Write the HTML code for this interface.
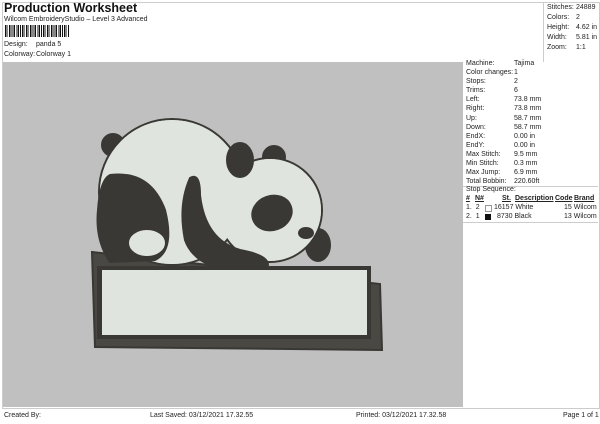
<!DOCTYPE html><html><head><style>
body{margin:0;width:600px;height:424px;background:#fff;font-family:"Liberation Sans",sans-serif;position:relative;overflow:hidden;color:#222}
.a{position:absolute;white-space:nowrap;font-size:7px}
</style></head><body>
<div style="position:absolute;left:2px;top:2px;width:596px;height:405px;border:1px solid #ccc"></div>
<div class="a" style="left:4px;top:1px;font-size:12.5px;font-weight:bold;color:#111">Production Worksheet</div>
<div class="a" style="left:4px;top:16px">Wilcom EmbroideryStudio – Level 3 Advanced</div>
<div style="position:absolute;left:5px;top:25px;width:64px;height:12px;background:repeating-linear-gradient(90deg,#111 0 1.5px,#fff 1.5px 2.5px,#111 2.5px 3.2px,#fff 3.2px 4.2px)"></div>
<div class="a" style="left:4px;top:41px">Design:</div><div class="a" style="left:36px;top:41px">panda 5</div>
<div class="a" style="left:4px;top:51px">Colorway:</div><div class="a" style="left:36px;top:51px">Colorway 1</div>
<div style="position:absolute;left:543px;top:2px;width:1px;height:60px;background:#ccc"></div>
<div class="a" style="left:547px;top:3px;line-height:10px">Stitches:<br>Colors:<br>Height:<br>Width:<br>Zoom:</div>
<div class="a" style="left:576px;top:3px;line-height:10px">24889<br>2<br>4.62 in<br>5.81 in<br>1:1</div>
<div style="position:absolute;left:3px;top:62px;width:460px;height:345px;background:#c0c0c0"></div>
<div class="a" style="left:466px;top:59px;line-height:9.1px">Machine:<br>Color changes:<br>Stops:<br>Trims:<br>Left:<br>Right:<br>Up:<br>Down:<br>EndX:<br>EndY:<br>Max Stitch:<br>Min Stitch:<br>Max Jump:<br>Total Bobbin:</div>
<div class="a" style="left:514px;top:59px;line-height:9.1px">Tajima<br>1<br>2<br>6<br>73.8 mm<br>73.8 mm<br>58.7 mm<br>58.7 mm<br>0.00 in<br>0.00 in<br>9.5 mm<br>0.3 mm<br>6.9 mm<br>220.60ft</div>
<div style="position:absolute;left:463px;top:186px;width:135px;height:1px;background:#ccc"></div>
<div class="a" style="left:466px;top:186px">Stop Sequence:</div>
<div class="a" style="left:466px;top:195px;font-weight:bold;text-decoration:underline">#</div>
<div class="a" style="left:475px;top:195px;font-weight:bold;text-decoration:underline">N#</div>
<div class="a" style="left:502px;top:195px;font-weight:bold;text-decoration:underline">St.</div>
<div class="a" style="left:515px;top:195px;font-weight:bold;text-decoration:underline">Description</div>
<div class="a" style="left:555px;top:195px;font-weight:bold;text-decoration:underline">Code</div>
<div class="a" style="left:574px;top:195px;font-weight:bold;text-decoration:underline">Brand</div>
<div class="a" style="left:466px;top:204px">1. &nbsp;2</div><div style="position:absolute;left:485px;top:205px;width:5px;height:5px;border:1px solid #999"></div>
<div class="a" style="left:494px;top:204px">16157 White</div><div class="a" style="left:564px;top:204px">15 Wilcom</div>
<div class="a" style="left:466px;top:213px">2. &nbsp;1</div><div style="position:absolute;left:485px;top:214px;width:6px;height:6px;background:#111"></div>
<div class="a" style="left:497px;top:213px">8730 Black</div><div class="a" style="left:564px;top:213px">13 Wilcom</div>
<div style="position:absolute;left:463px;top:222px;width:135px;height:1px;background:#ccc"></div>
<div style="position:absolute;left:2px;top:408px;width:596px;height:1px;background:#ccc"></div>
<div class="a" style="left:4px;top:412px">Created By:</div>
<div class="a" style="left:150px;top:412px">Last Saved: 03/12/2021 17.32.55</div>
<div class="a" style="left:356px;top:412px">Printed: 03/12/2021 17.32.58</div>
<div class="a" style="left:563px;top:412px">Page 1 of 1</div>
<svg style="position:absolute;left:0;top:0" width="600" height="424">
<g stroke="#3a3834" stroke-width="2">
<polygon points="92,252 380,284 382,350 95,347" fill="#4a4843"/>
<circle cx="113" cy="145" r="11" fill="#3a3834"/>
<circle cx="274" cy="157" r="11" fill="#3a3834"/>
<ellipse cx="318" cy="245" rx="12" ry="16" fill="#3a3834"/>
<circle cx="172" cy="192" r="73" fill="#dfe5de"/>
<circle cx="270" cy="210" r="52" fill="#dfe5de"/>
<circle cx="172" cy="192" r="72" fill="#dfe5de" stroke="none"/>
<circle cx="270" cy="210" r="51" fill="#dfe5de" stroke="none"/>
<ellipse cx="240" cy="160" rx="13" ry="17" fill="#3a3834"/>
<ellipse cx="272" cy="213" rx="20" ry="17" transform="rotate(-20 272 213)" fill="#3a3834"/>
<ellipse cx="306" cy="233" rx="7" ry="5" fill="#3a3834"/>
<path d="M110 175 Q150 170 165 210 Q175 250 155 260 L110 262 Q95 240 98 210 Q100 180 110 175Z" fill="#3a3834"/>
<ellipse cx="147" cy="243" rx="19" ry="14" fill="#dfe5de"/>
<path d="M190 178 Q200 172 200 195 Q205 240 240 250 Q268 255 268 265 Q265 275 240 272 Q195 268 185 240 Q178 205 190 178Z" fill="#3a3834"/>
<rect x="98" y="267" width="272" height="71" fill="#3a3834"/>
<rect x="102" y="270" width="265" height="65" fill="#dfe5de" stroke="none"/>
</g></svg>
</body></html>
